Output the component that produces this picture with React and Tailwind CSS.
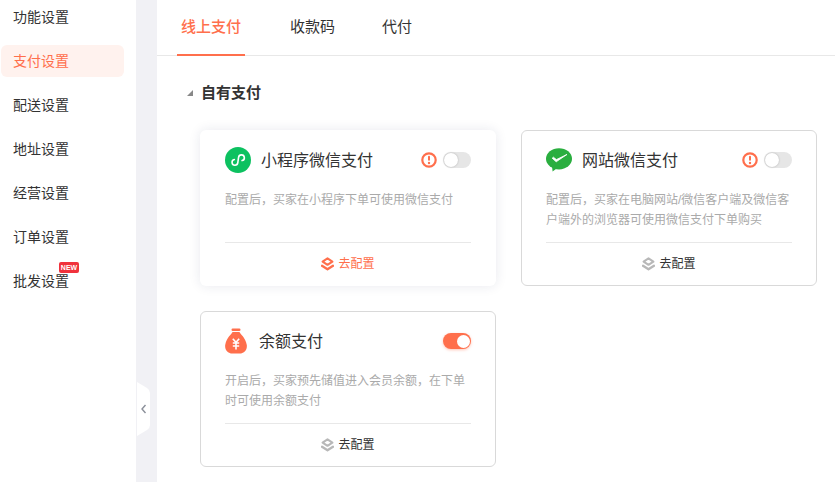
const FONT = "font-['Liberation_Sans','Noto_Sans_CJK_SC',sans-serif]";

function Layers({ color }) {
  return (
    <svg width="13" height="14" viewBox="0 0 13 14" className="shrink-0">
      <path d="M6.5 1.4 L11.4 4.6 L6.5 7.8 L1.6 4.6 Z" fill="none" stroke={color} strokeWidth="2.1" strokeLinejoin="round" />
      <path d="M1 8.8 L6.5 12.3 L12 8.8" fill="none" stroke={color} strokeWidth="2.3" strokeLinecap="round" strokeLinejoin="round" />
    </svg>
  );
}

function Warn() {
  return (
    <svg width="16" height="16" viewBox="0 0 16 16" className="shrink-0">
      <circle cx="8" cy="8" r="6.7" fill="#fff" stroke="#ff6f4c" strokeWidth="2.2" />
      <rect x="7" y="3.8" width="2" height="5" rx="1" fill="#ff6f4c" />
      <circle cx="8" cy="11" r="1.2" fill="#ff6f4c" />
    </svg>
  );
}

function Toggle({ on }) {
  return on ? (
    <div className="w-7 h-4 rounded-full bg-[#ff6f4c] flex items-center justify-end pr-[1px] shadow-[0_1px_3px_rgba(255,111,76,0.4)]">
      <div className="w-[13px] h-[13px] rounded-full bg-white" />
    </div>
  ) : (
    <div className="w-7 h-4 rounded-full bg-[#e6e6e6] flex items-center pl-[1px]">
      <div className="w-[14px] h-[14px] rounded-full bg-white shadow-[0_0_2px_rgba(0,0,0,0.25)]" />
    </div>
  );
}

function MiniIcon() {
  return (
    <svg width="26" height="26" viewBox="0 0 26 26" className="shrink-0">
      <circle cx="13" cy="13" r="13" fill="#0cc160" />
      <path
        transform="rotate(8 13 13)"
        d="M9.3 13 A2.9 2.9 0 1 0 13.2 15.7 V10.3 A2.9 2.9 0 1 1 17.1 13"
        fill="none"
        stroke="#fff"
        strokeWidth="1.6"
        strokeLinecap="round"
      />
    </svg>
  );
}

function WechatIcon() {
  return (
    <svg width="26" height="24" viewBox="0 0 26 24" className="shrink-0">
      <ellipse cx="13" cy="10.8" rx="13" ry="10.6" fill="#2aae3f" />
      <path d="M6 18 L6.6 23.4 L12 19.5 Z" fill="#2aae3f" />
      <path d="M6.2 10.2 L10.2 13.8 L21 6.4 L10.4 11.6 L7.4 9.2 Z" fill="#fff" stroke="#fff" strokeWidth="0.8" strokeLinejoin="round" />
    </svg>
  );
}

function BagIcon() {
  return (
    <svg width="22" height="26" viewBox="0 0 22 26" className="shrink-0">
      <rect x="6.5" y="0.5" width="9" height="2.4" rx="1.2" fill="#ff6f4c" />
      <path d="M7.5 4 H14.5 C15 6 20.5 9 21.8 17 C22.5 23 18 25.5 15 25.5 H7 C4 25.5 -0.5 23 0.2 17 C1.5 9 7 6 7.5 4 Z" fill="#ff6f4c" />
      <path d="M7.8 10.8 L11 14.4 L14.2 10.8 M7.8 15 H14.2 M7.8 18 H14.2 M11 14.4 V21.5" fill="none" stroke="#fff" strokeWidth="1.6" />
    </svg>
  );
}

function Card({ icon, title, desc, warn, on, active, gap }) {
  return (
    <div
      className={
        "w-[296px] h-[156px] rounded-md bg-white px-6 flex flex-col " +
        (active
          ? "border border-transparent shadow-[0_0_12px_rgba(30,40,90,0.1)]"
          : "border border-[#d9d9d9]")
      }
    >
      <div className="h-[58px] mb-[1px] flex items-center">
        {icon}
        <span className={"text-base text-[#333] pt-[1px] " + gap}>{title}</span>
        <div className="ml-auto flex items-center gap-[6px]">
          {warn && <Warn />}
          <Toggle on={on} />
        </div>
      </div>
      <p className="text-xs leading-5 text-[#aaa] h-[52px]">{desc}</p>
      <div className="border-t border-[#e8e8e8] flex-1 flex items-center justify-center gap-1">
        <Layers color={active ? "#ff6f4c" : "#b8b8b8"} />
        <span className={"text-xs " + (active ? "text-[#ff6f4c]" : "text-[#333]")}>去配置</span>
      </div>
    </div>
  );
}

const menu = ["功能设置", "支付设置", "配送设置", "地址设置", "经营设置", "订单设置", "批发设置"];

export default function App() {
  return (
    <div className={"relative flex h-[482px] w-[835px] overflow-hidden bg-[#f1f1f5] " + FONT}>
      <aside className="w-[136px] shrink-0 bg-white pt-[1px] pl-[1px]">
        {menu.map((m, i) => (
          <div
            key={m}
            className={
              "relative w-[123px] h-8 mb-3 pl-3 flex items-center text-[14px] rounded-md " +
              (i === 1 ? "bg-[#fff2ee] text-[#ff6f4c]" : "text-[#333]")
            }
          >
            {m}
            {m === "批发设置" && (
              <span className="absolute left-[58px] top-[-3px] h-[11px] w-5 rounded-[2px] bg-[#f0323c] text-white text-[7px] font-bold leading-[11px] text-center">
                NEW
              </span>
            )}
          </div>
        ))}
      </aside>
      <svg width="14" height="54" viewBox="0 0 14 54" className="absolute left-[137px] top-[382px]">
        <path d="M0 0 L10 6 Q13 8 13 11 V43 Q13 46 10 48 L0 54 Z" fill="#fff" />
        <path d="M8.5 23 L5 27 L8.5 31" fill="none" stroke="#8a8f99" strokeWidth="1.4" />
      </svg>
      <main className="ml-[21px] flex-1 bg-white">
        <div className="h-[56px] border-b border-[#e8e8e8] flex pl-5 text-[15px] text-[#333]">
          <div className="h-[56px] px-1 flex items-center text-[#ff6f4c] font-medium border-b-2 border-[#ff6f4c]">
            线上支付
          </div>
          <div className="ml-[45px] flex items-center">收款码</div>
          <div className="ml-[47px] flex items-center">代付</div>
        </div>
        <div className="flex items-center h-[20px] mt-[27px] ml-[30px]">
          <span className="w-0 h-0 border-l-[6px] border-l-transparent border-b-[6px] border-b-[#888] mr-[8px]" />
          <span className="text-[15px] font-bold text-[#333]">自有支付</span>
        </div>
        <div className="grid grid-cols-[296px_296px] gap-[25px] ml-[43px] mt-[27px]">
          <Card active icon={<MiniIcon />} gap="ml-[10px]" title="小程序微信支付" warn desc="配置后，买家在小程序下单可使用微信支付" />
          <Card icon={<WechatIcon />} gap="ml-[10px]" title="网站微信支付" warn desc="配置后，买家在电脑网站/微信客户端及微信客户端外的浏览器可使用微信支付下单购买" />
          <Card on icon={<BagIcon />} gap="ml-[12px]" title="余额支付" desc="开启后，买家预先储值进入会员余额，在下单时可使用余额支付" />
        </div>
      </main>
    </div>
  );
}
